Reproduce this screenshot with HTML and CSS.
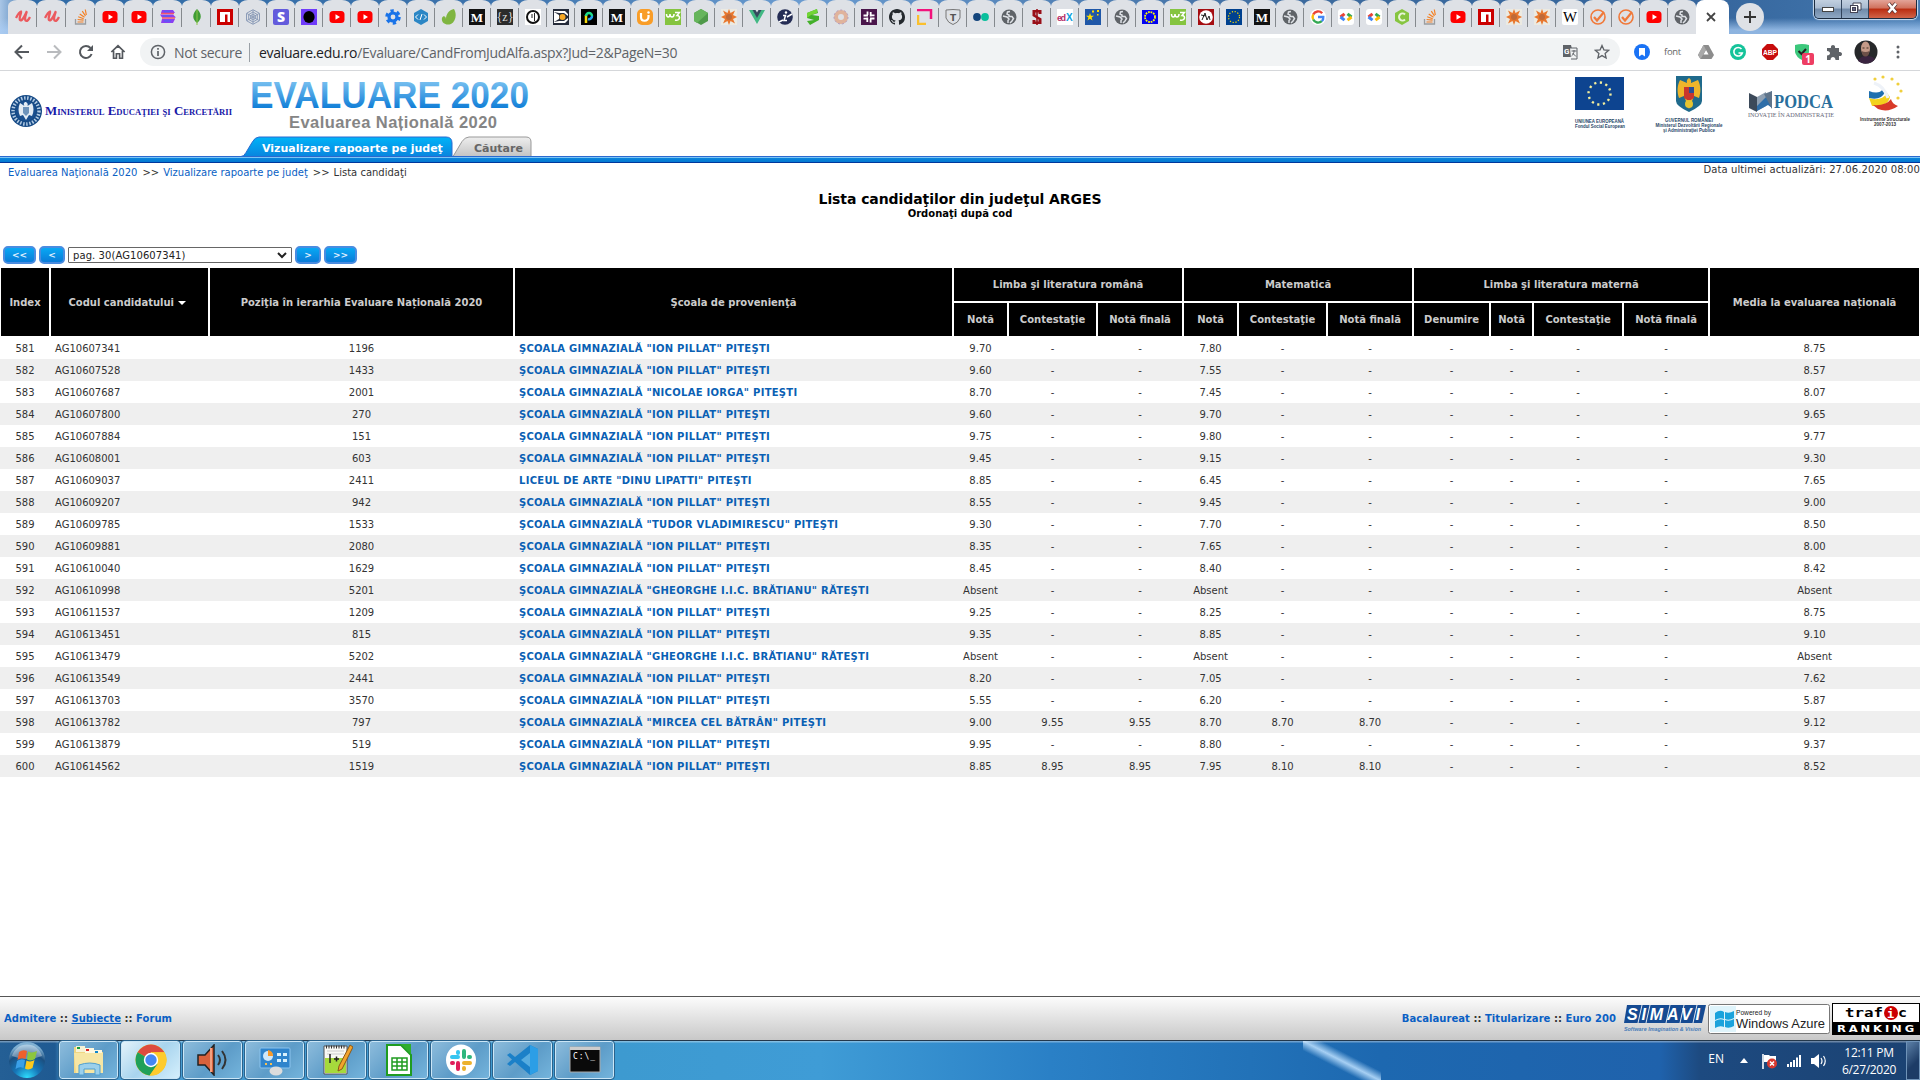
FILE: index.html
```html
<!DOCTYPE html>
<html lang="ro">
<head>
<meta charset="utf-8">
<title>Evaluare 2020</title>
<link rel="stylesheet" href="styles.css">
</head>
<body>
<svg width="0" height="0" class="defs">
  <defs>
    <linearGradient id="blueText" x1="0" y1="0" x2="0" y2="1"><stop offset=".15" stop-color="#78c0f0"/><stop offset=".85" stop-color="#0a7ad6"/></linearGradient>
    <linearGradient id="tabBlue" x1="0" y1="0" x2="0" y2="1"><stop offset="0" stop-color="#00b4f8"/><stop offset="1" stop-color="#0a80dc"/></linearGradient>
    <linearGradient id="tabGrey" x1="0" y1="0" x2="0" y2="1"><stop offset="0" stop-color="#eee"/><stop offset="1" stop-color="#c4c4c4"/></linearGradient>
    <radialGradient id="orb" cx=".5" cy="1" r=".9"><stop offset="0" stop-color="#2ee0ff"/><stop offset=".4" stop-color="#1676b8"/><stop offset=".75" stop-color="#1b4f80"/><stop offset="1" stop-color="#7fb0d2"/></radialGradient>
    <symbol id="u" viewBox="0 0 16 16"><path d="M1 9C3 5 4 3 6 2.500C7 3 3.500 9 5 11C7 13 10 6 11.500 3C12 3 9 9 10.500 11.500C12 13 14 10 15 8" fill="none" stroke="#eb5a5e" stroke-width="2.300"/></symbol>
    <symbol id="so" viewBox="0 0 16 16"><path d="M2.500 10v5h10v-5" fill="none" stroke="#9a9c9f" stroke-width="1.300"/><path d="M4.500 13h6M4.600 10.500l6 .7M5.200 7.800l5.500 1.900M6.700 5l4.800 3.300M9.300 2.200l3.200 4.800M12.300.5l1 5.500" stroke="#f48024" stroke-width="1.200"/></symbol>
    <symbol id="yt" viewBox="0 0 16 16"><rect x=".5" y="2" width="15" height="12" rx="3.500" fill="#f00"/><path d="M6.500 5.300v5.400L11 8z" fill="#fff"/></symbol>
    <symbol id="stack" viewBox="0 0 16 16"><path d="M2 1h11l2 3H1zM0 5.500h13l3 3H2zM2 10h13l-2 4H1z" fill="#8a3ff2"/><path d="M1 4.500h13M2 9h13" stroke="#f0566e" stroke-width="1.500"/><path d="M4 2.500h6M3 7h7M4 12h7" stroke="#5a5cf5" stroke-width="1.500"/></symbol>
    <symbol id="mongo" viewBox="0 0 16 16"><path d="M8 0c5 5 5 10 0 14C3 10 3 5 8 0z" fill="#3f9c35"/><path d="M8 1v15" stroke="#8bc34a"/></symbol>
    <symbol id="npm" viewBox="0 0 16 16"><path d="M0 0h16v16H0z" fill="#cb0000"/><path d="M3 3h10v10h-2.500V5.500H8V13H3z" fill="#fff"/></symbol>
    <symbol id="hex" viewBox="0 0 16 16"><g fill="none" stroke="#8c9cb8"><path d="M8 .7l6.500 3.600v7.400L8 15.300l-6.500-3.600V4.300z"/><path d="M8 3l4.300 2.500v5L8 13l-4.300-2.500v-5z"/><circle cx="8" cy="8" r="2.500"/><path d="M8 1v14M2 4.500l12 7M14 4.500l-12 7"/></g></symbol>
    <symbol id="s" viewBox="0 0 16 16"><rect width="16" height="16" rx="2" fill="#635bdc"/><text x="8" y="13" font-family="Open Sans" font-weight="800" font-size="14" text-anchor="middle" fill="#fff">S</text></symbol>
    <symbol id="oval" viewBox="0 0 16 16"><path d="M0 0h16v16H0z" fill="#6f3bfa"/><ellipse cx="8" cy="8" rx="5.600" ry="6" fill="#000"/></symbol>
    <symbol id="gear" viewBox="0 0 16 16"><circle cx="8" cy="8" r="6" fill="none" stroke="#1a73e8" stroke-width="3.500" stroke-dasharray="3.140 3.140"/><circle cx="8" cy="8" r="4" fill="none" stroke="#1a73e8" stroke-width="3.200"/></symbol>
    <symbol id="code" viewBox="0 0 16 16"><path d="M8 0l7 4v8l-7 4-7-4V4z" fill="#2b86c5"/><path d="M5 5.500L2.500 8 5 10.500M11 5.500L13.500 8 11 10.500M9 5l-2 6" fill="none" stroke="#fff"/></symbol>
    <symbol id="envato" viewBox="0 0 16 16"><path d="M13 0c3 5 2 12-3 15C4 17 0 13 1 9c1-3 4-2 4 1C5 5 8 1 13 0z" fill="#7fb541"/></symbol>
    <symbol id="m" viewBox="0 0 16 16"><path d="M0 0h16v16H0z" fill="#111"/><text x="8" y="12.500" font-family="Liberation Serif" font-weight="700" font-size="13" text-anchor="middle" fill="#fff">M</text></symbol>
    <symbol id="z" viewBox="0 0 16 16"><path d="M0 0h16v16H0z" fill="#2b2b2b"/><text x="8" y="12" font-family="Liberation Serif" font-size="12" text-anchor="middle" fill="#ddd">{z}</text></symbol>
    <symbol id="ring" viewBox="0 0 16 16"><path d="M0 0h16v16H0z" fill="#fff"/><circle cx="8" cy="8" r="6" fill="none" stroke="#111" stroke-width="2"/><path d="M7 5v4M9.500 4v8" stroke="#222"/></symbol>
    <symbol id="ball" viewBox="0 0 16 16"><path d="M0 0h16v16H0z" fill="#252b3a"/><path d="M1 2h11l3 3v2l-4-3H6L1 3zM1 14h11l3-3V9l-4 3H6l-5 1z" fill="#fff"/><path d="M1 3l5 3v4l-5 3z" fill="#fff"/><circle cx="9.500" cy="8" r="3" fill="#f8a925"/></symbol>
    <symbol id="p" viewBox="0 0 16 16"><path d="M0 0h16v16H0z"/><path d="M5 14V6" stroke="#f5d90a" stroke-width="2.500"/><path d="M5 7a3 3 0 0 1 6 0" fill="none" stroke="#1fdc8a" stroke-width="2.500"/><path d="M11 7a3 3 0 0 1-4 3" fill="none" stroke="#26a6f0" stroke-width="2.500"/></symbol>
    <symbol id="uj" viewBox="0 0 16 16"><rect width="16" height="16" rx="5" fill="#f99d28"/><path d="M4 4v4c0 5 7 5 7.500 0V6" fill="none" stroke="#fff" stroke-width="2.200"/><circle cx="11.500" cy="3.500" r="1.200" fill="#fff"/></symbol>
    <symbol id="w3" viewBox="0 0 16 16"><path d="M0 0h16v16H0z" fill="#85c440"/><path d="M1.500 5c0 4 3.500 4 3.500 0 0 4 4 4 4 0M10 3.500h4.500l-2.500 3c4 0 3 6-2 4.500" fill="none" stroke="#fff" stroke-width="1.500"/></symbol>
    <symbol id="node" viewBox="0 0 16 16"><path d="M8 0l7 4v8l-7 4-7-4V4z" fill="#4f9a4a"/><path d="M8 0l7 4-11 10-3-2V4z" fill="#66b55c"/></symbol>
    <symbol id="star" viewBox="0 0 16 16"><path d="M0 0h16v16H0z" fill="#eceae2"/><path d="M8 0l1.500 4L14 1.500 12 6l4 2-4 2 2 4.500L9.500 12 8 16l-1.500-4L2 14.500 4 10 0 8l4-2-2-4.500L6.500 4z" fill="#e8772e"/><circle cx="8" cy="8" r="3" fill="#c06a38"/></symbol>
    <symbol id="vue" viewBox="0 0 16 16"><path d="M0 1h4l4 7 4-7h4L8 15z" fill="#41b883"/><path d="M3.500 1h3L8 3.500 9.500 1h3L8 9z" fill="#35495e"/></symbol>
    <symbol id="i" viewBox="0 0 16 16"><circle cx="8" cy="8" r="7.800" fill="#252d55"/><path d="M6 6.500h2.500L7 11.500h3M2 13l4-2M10 8l5-3" stroke="#fff" stroke-width="1.500" fill="none"/><circle cx="9" cy="3.500" r="1.200" fill="#fff"/></symbol>
    <symbol id="gs" viewBox="0 0 16 16"><path d="M12 0L2 4v5l7 2-7 1 3 4 9-5V7L7 6l6-2z" fill="#43b02a"/><path d="M12 0L2 4v5l4-3 6-2z" fill="#72d535"/></symbol>
    <symbol id="pale" viewBox="0 0 16 16"><circle cx="8" cy="8" r="5" fill="none" stroke="#e0b39c" stroke-width="4"/><circle cx="8" cy="8" r="7" fill="none" stroke="#b59dbd" stroke-dasharray="2 2"/></symbol>
    <symbol id="slackp" viewBox="0 0 16 16"><path d="M0 0h16v16H0z" fill="#4a154b"/><path d="M6.500 2.500v3.500M9.700 3v4.500M2.500 6.500H7M10 6.300h3.500M6.300 8.500V13M9.600 10v3.500M2.500 9.600H6M9 9.500h4.500" stroke="#fff" stroke-width="1.800"/></symbol>
    <symbol id="gh" viewBox="0 0 16 16"><path fill="#24292e" d="M8 0C3.580 0 0 3.580 0 8c0 3.540 2.290 6.530 5.470 7.590.4.070.55-.17.55-.38v-1.490c-2.010.37-2.530-.49-2.690-.94-.09-.23-.48-.94-.82-1.130-.28-.15-.68-.52-.01-.53.630-.01 1.080.58 1.230.82.720 1.210 1.870.87 2.330.66.070-.52.280-.87.510-1.070-1.780-.2-3.640-.89-3.640-3.950 0-.87.310-1.590.820-2.150-.08-.2-.36-1.020.08-2.120 0 0 .67-.21 2.200.82A7.700 7.700 0 0 1 8 3.900c.68 0 1.360.09 2 .27 1.530-1.040 2.200-.82 2.200-.82.440 1.100.16 1.920.08 2.120.51.56.82 1.270.82 2.150 0 3.070-1.870 3.750-3.650 3.950.29.25.54.73.54 1.480v2.200c0 .21.150.46.55.38A8 8 0 0 0 16 8c0-4.420-3.580-8-8-8z"/></symbol>
    <symbol id="corner" viewBox="0 0 16 16"><path d="M0 1h14v9" fill="none" stroke="#f2137c" stroke-width="2.500"/><path d="M1 6v9h8" fill="none" stroke="#fbc02d" stroke-width="2.500"/></symbol>
    <symbol id="t" viewBox="0 0 16 16"><path d="M1 1q7-1 14 0v8q-2 5-7 6.500Q3 14 1 9z" fill="none" stroke="#777"/><text x="8" y="11.500" font-family="DejaVu Sans" font-weight="700" font-size="9" text-anchor="middle" fill="#555">T</text></symbol>
    <symbol id="dots" viewBox="0 0 16 16"><circle cx="4" cy="8" r="3.900" fill="#14457c"/><circle cx="12" cy="8" r="3.900" fill="#0abf9c"/></symbol>
    <symbol id="globe" viewBox="0 0 16 16"><circle cx="8" cy="8" r="7.500" fill="#5f6368"/><path d="M9 2.500L6.500 3 6 5l2 1v1.500H11l1.500 2L11 12l-2 2M2 7l4 1 2 2-1 1.500V14" fill="none" stroke="#dee1e6" stroke-width="1.500"/></symbol>
    <symbol id="rs" viewBox="0 0 16 16"><path d="M12.500 1v4H9.500V3.500h-3V6l6 3.500V15h-9v-4h3v1.500h3V10.500l-6-3.500V1z" fill="#990f18"/><path d="M8 0v16" stroke="#990f18" stroke-width="1.600"/></symbol>
    <symbol id="edx" viewBox="0 0 16 16"><path d="M0 0h16v16H0z" fill="#fff"/><text x="0" y="12" font-family="Liberation Sans" font-weight="700" font-size="9" textLength="9" fill="#b52a67">ed</text><text x="9" y="12" font-family="Liberation Sans" font-weight="700" font-size="10" fill="#0a9fe0">X</text></symbol>
    <symbol id="bstars" viewBox="0 0 16 16"><path d="M0 0h16v16H0z" fill="#1f57a8"/><path d="M5 4l1 2.800h3L6.600 8.500l.9 3L5 9.700l-2.500 1.800.9-3L1 6.800h3z" fill="#fd0"/><path d="M7 1.500h2v2H7zM12 1h2v2h-2zM12 5h1.500v1.500H12z" fill="#fd0"/></symbol>
    <symbol id="eub" viewBox="0 0 16 16"><path d="M0 1h16v14H0z" fill="#0404f0"/><circle cx="8" cy="8" r="5" fill="none" stroke="#ff0" stroke-width="1.800" stroke-dasharray="1.700 .92"/></symbol>
    <symbol id="eu" viewBox="0 0 16 16"><path d="M0 0h16v16H0z" fill="#00418f"/><circle cx="8" cy="8" r="5.500" fill="none" stroke="#fd0" stroke-width="1.200" stroke-dasharray="1.200 1.680"/></symbol>
    <symbol id="n" viewBox="0 0 16 16"><path d="M0 0h16v16H0z" fill="#a50d12"/><circle cx="8" cy="8" r="6.800" fill="#fff"/><path d="M4 11l3-7 2 7 2-4 1 4M3 6l5 1" fill="none" stroke="#222"/></symbol>
    <symbol id="g" viewBox="0 0 16 16"><circle cx="8" cy="8" r="8" fill="#fff"/><g fill="none" stroke-width="2.400"><path d="M12.200 4.200A5.500 5.500 0 0 0 3.200 5.500" stroke="#ea4335"/><path d="M3.200 5.500a5.500 5.500 0 0 0 0 5" stroke="#fbbc05"/><path d="M3.200 10.500a5.500 5.500 0 0 0 8.600 1.700" stroke="#34a853"/><path d="M11.800 12.200A5 5 0 0 0 13.300 8H8" stroke="#4285f4"/></g></symbol>
    <symbol id="gdev" viewBox="0 0 16 16"><rect width="16" height="16" rx="3" fill="#fff"/><g fill="none" stroke-width="3"><path d="M6.500 4.800L2.500 8" stroke="#ea4335"/><path d="M2.500 8l4 3.200" stroke="#4285f4"/><path d="M9.500 4.800l4 3.200" stroke="#34a853"/><path d="M13.500 8l-4 3.200" stroke="#fbbc05"/></g></symbol>
    <symbol id="cc" viewBox="0 0 16 16"><path d="M8 0l7 4v8l-7 4-7-4V4z" fill="#86c540"/><path d="M11 5.500a3.500 3.500 0 1 0 0 5" fill="none" stroke="#e8f5d8" stroke-width="2"/></symbol>
    <symbol id="w" viewBox="0 0 16 16"><rect width="16" height="16" rx="2" fill="#fff"/><text x="8" y="13" font-family="Liberation Serif" font-size="15" text-anchor="middle" textLength="14" lengthAdjust="spacingAndGlyphs">W</text></symbol>
    <symbol id="check" viewBox="0 0 16 16"><circle cx="8" cy="8" r="7" fill="none" stroke="#f0793a" stroke-width="1.600"/><path d="M4 8l3 3.500L14 3" fill="none" stroke="#f0793a" stroke-width="2.200"/></symbol>
  </defs>
</svg>

<div class="screen">
  <div class="tabstrip">
    <div class="tabs" id="tabs"></div>
    <div class="tab-active"><svg width="10" height="10" viewBox="0 0 10 10"><path d="M1 1l8 8M9 1L1 9" stroke="#444" stroke-width="1.800"/></svg></div>
    <div class="newtab"><svg width="12" height="12" viewBox="0 0 12 12"><path d="M6 0v12M0 6h12" stroke="#333" stroke-width="1.900"/></svg></div>
    <div class="wincontrols">
      <span class="win"><svg width="12" height="12"><rect x=".5" y="5.500" width="11" height="4" fill="#fff" stroke="#444"/></svg></span>
      <span class="win"><svg width="13" height="12"><path d="M4 1h8v7H9V4H4z" fill="#fff" stroke="#445"/><rect x="1.500" y="3.500" width="7" height="7" fill="#fff" stroke="#445"/><rect x="3.500" y="5.500" width="3" height="3" fill="#668" stroke="#445"/></svg></span>
      <span class="win close"><svg width="13" height="12"><path d="M2.500 1.500l7.500 9M10 1.500l-7.500 9" stroke="#533" stroke-width="4"/><path d="M2.500 1.500l7.500 9M10 1.500l-7.500 9" stroke="#fff" stroke-width="2.600"/></svg></span>
    </div>
  </div>

  <div class="toolbar">
    <div class="nav">
      <svg width="16" height="16" viewBox="0 0 16 16"><path d="M15 8H2M8 1.500L1.500 8 8 14.500" fill="none" stroke="#54585d" stroke-width="2"/></svg>
      <svg width="16" height="16" viewBox="0 0 16 16"><path d="M1 8h13M8 1.500L14.500 8 8 14.500" fill="none" stroke="#b9bbbe" stroke-width="2"/></svg>
      <svg width="16" height="16" viewBox="0 0 16 16"><path d="M13.600 10A6 6 0 1 1 12.500 4" fill="none" stroke="#54585d" stroke-width="2"/><path d="M15 1v6H9z" fill="#54585d"/></svg>
      <svg width="16" height="16" viewBox="0 0 18 18"><path d="M1.500 9L9 2l7.500 7M4 7.500V16h3.200v-5h3.600v5H14V7.500" fill="none" stroke="#54585d" stroke-width="1.900"/></svg>
    </div>
    <div class="omnibox">
      <svg width="16" height="16" viewBox="0 0 16 16"><circle cx="8" cy="8" r="6.600" fill="none" stroke="#5f6368" stroke-width="1.500"/><path d="M8 7v5M8 4v1.800" stroke="#5f6368" stroke-width="1.700"/></svg>
      <span class="notsecure">Not secure</span>
      <span class="url"><b>evaluare.edu.ro</b>/Evaluare/CandFromJudAlfa.aspx?Jud=2&amp;PageN=30</span>
      <svg class="translate" width="16" height="16" viewBox="0 0 16 16"><path d="M1 1h8l3 12H1z" fill="#5f6368"/><path d="M8 4h7v11H9" fill="#f1f3f4" stroke="#5f6368"/><text x="2" y="9.500" font-family="Roboto" font-weight="700" font-size="8" fill="#fff">G</text><path d="M9.500 7h5M12 6v1c0 2-1 4-2.500 5M10.500 9l3.500 3.500" stroke="#5f6368" fill="none"/></svg>
      <svg width="16" height="16" viewBox="0 0 16 16"><path d="M8 1.500l1.900 4.300 4.700.5-3.500 3.100 1 4.600L8 11.600 3.900 14l1-4.600L1.400 6.300l4.700-.5z" fill="none" stroke="#5f6368" stroke-width="1.300"/></svg>
    </div>
    <div class="ext">
      <svg viewBox="0 0 16 16"><circle cx="8" cy="8" r="8" fill="#1a73f5"/><path d="M5 4h6v8.500L8 10.500l-3 2z" fill="#fff"/></svg>
      <span class="font">font</span>
      <svg viewBox="0 0 16 16"><path d="M5.500 1h5L16 11l-2.500 4h-11L0 11z" fill="#8c8c8c"/><path d="M8 6l2.500 4.500h-5z" fill="#fff"/><path d="M5.500 1L0 11l2.500 4L8 6z" fill="#a9a9a9"/></svg>
      <svg viewBox="0 0 16 16"><circle cx="8" cy="8" r="8" fill="#15c39a"/><path d="M11.500 5a4.300 4.300 0 1 0 .8 4H8.500" fill="none" stroke="#fff" stroke-width="1.600"/></svg>
      <svg viewBox="0 0 16 16"><path d="M5 0h6l5 5v6l-5 5H5l-5-5V5z" fill="#c70d0d"/><text x="8" y="11" font-family="Liberation Sans" font-weight="700" font-size="8" textLength="14" lengthAdjust="spacingAndGlyphs" text-anchor="middle" fill="#fff">ABP</text></svg>
      <span class="badged"><svg viewBox="0 0 16 16"><path d="M1 1q7-2 14 0v7q-1 5-7 8-6-3-7-8z" fill="#3cc87c"/><path d="M4.500 7l3 3L12 5" stroke="#222" stroke-width="2" fill="none"/></svg><i>1</i></span>
      <svg viewBox="0 0 16 16"><path d="M1 4h4c-1-4 5-4 4 0h4v4c4-1 4 5 0 4v4H9.500c0-4-5-4-5 0H1v-4.500c4 0 4-4.500 0-4.500z" fill="#5f6368"/></svg>
      <span class="avatar"><svg viewBox="0 0 26 26"><circle cx="13" cy="13" r="11.500" fill="#26282a"/><path d="M5 22c2-4 5-5 9-5s6 1 8 3a12 12 0 0 1-17 2z" fill="#3a2440"/><ellipse cx="12.500" cy="9.500" rx="4.500" ry="7" fill="#c49a88"/><path d="M8.500 12q4 2 8 0l-1 4q-3 3-6 0z" fill="#6c5048"/><path d="M9.500 9h2M13.500 9h2" stroke="#432"/></svg></span>
      <svg viewBox="0 0 16 16"><g fill="#5f6368"><circle cx="8" cy="3" r="1.500"/><circle cx="8" cy="8" r="1.500"/><circle cx="8" cy="13" r="1.500"/></g></svg>
    </div>
  </div>

  <header class="site">
    <div class="ministry">
      <svg width="34" height="34" viewBox="0 0 34 34"><circle cx="17" cy="17" r="16" fill="#164a86"/><circle cx="17" cy="17" r="13" fill="none" stroke="#b4cce4" stroke-width="3.500" stroke-dasharray="1.500 1.600"/><circle cx="17" cy="17" r="10" fill="#1a4f8e"/><path d="M17 8c2 1 2 3 1.500 4L23 9c2 4 2 9 0 13l-3-1-3 5-3-5-3 1c-2-4-2-9 0-13l4.500 3C14 10 15 8 17 8z" fill="#e4ecf4"/><path d="M14 13h6v6l-3 3-3-3z" fill="#6d93bb"/></svg>
      <svg width="190" height="20"><text class="min-name" x="1" y="14" textLength="187" lengthAdjust="spacingAndGlyphs">Ministerul Educaţiei şi Cercetării</text></svg>
    </div>
    <div class="brand">
      <svg class="brand-title" width="300" height="66"><text class="big" x="7" y="37" textLength="279" lengthAdjust="spacingAndGlyphs" fill="url(#blueText)">EVALUARE 2020</text><text class="sub" x="46" y="57" textLength="208">Evaluarea Națională 2020</text></svg>
      <div class="sitetabs">
        <div class="stab on"><svg width="215" height="22"><path d="M0 20.500h1q3 0 5-4l6-10q3-5.500 7-5.500h187q6 0 6 6v13.500h3v2H0z" fill="url(#tabBlue)" stroke="#2a6ad0"/></svg><span>Vizualizare rapoarte pe judeţ</span></div>
        <div class="stab off"><svg width="82" height="22"><path d="M1 20.500l9-15q3-4.500 7-4.500h57q5 0 5 5v14.500z" fill="url(#tabGrey)" stroke="#999"/></svg><span>Căutare</span></div>
      </div>
    </div>
    <svg class="sponsors" width="360" height="84" viewBox="1560 72 360 84">
      <path d="M1575 78h49v33h-49z" fill="#0d4490"/><circle cx="1599.500" cy="94.500" r="11" fill="none" stroke="#f5ef9c" stroke-width="2.400" stroke-dasharray="2.200 3.560"/>
      <g class="tiny"><text x="1575" y="123.500" textLength="49" lengthAdjust="spacingAndGlyphs">UNIUNEA EUROPEANĂ</text><text x="1575" y="129" textLength="50" lengthAdjust="spacingAndGlyphs">Fondul Social European</text></g>
      <path d="M1676 77h26v25q0 5-13 11-13-6-13-11z" fill="#1f6a8c"/><path d="M1689 79c3 2 2 4 2 5l7-3c3 6 3 12 1 18l-5-2-5 13-5-13-5 2c-2-6-2-12 1-18l7 3c0-1-1-3 2-5z" fill="#efb52b"/><path d="M1684 88h10v11l-5 3-5-3z" fill="#c8362e"/><path d="M1689 88h5v6h-5z" fill="#2b4f96"/><circle cx="1689" cy="105" r="4" fill="#e6c430"/>
      <g class="tiny mid"><text x="1689" y="123" textLength="48" lengthAdjust="spacingAndGlyphs">GUVERNUL ROMÂNIEI</text><text x="1689" y="128" textLength="67" lengthAdjust="spacingAndGlyphs">Ministerul Dezvoltării Regionale</text><text x="1689" y="133" textLength="52" lengthAdjust="spacingAndGlyphs">şi Administraţiei Publice</text></g>
      <path d="M1749 94l8 4v15l-8-4z" fill="#3c4a5a"/><path d="M1757 98l9-5v14l-9 5z" fill="#8fa0b2"/><path d="M1757 107l15-15v17l-4-3-11 6z" fill="#2f6ea8"/><path d="M1764 95l8-3v18z" fill="#5f748a"/>
      <text class="podca" x="1774" y="109" textLength="59" lengthAdjust="spacingAndGlyphs">PODCA</text><text class="inov" x="1748" y="117.500" textLength="86" lengthAdjust="spacingAndGlyphs">INOVAŢIE ÎN ADMINISTRAŢIE</text>
      <path d="M1869 92q10 4 14-2l2 3q-4 9-16 6z" fill="#1f6fae"/><path d="M1869 99q12 4 18-5l3 4q-2 10-18 9z" fill="#f3d21c"/><path d="M1873 106q13 1 18-6 1 5 7 7-10 7-20 3z" fill="#d83a28"/><path d="M1874 84q10 3 14 15" fill="none" stroke="#eef2f8" stroke-width="3"/>
      <g fill="#f0cf3c"><circle cx="1875" cy="80" r="1.600"/><circle cx="1883" cy="78" r="1.600"/><circle cx="1892" cy="80" r="1.600"/><circle cx="1898" cy="85" r="1.600"/><circle cx="1901" cy="92" r="1.600"/><circle cx="1898" cy="99" r="1.600"/></g>
      <g class="tiny mid dark"><text x="1885" y="122" textLength="50" lengthAdjust="spacingAndGlyphs">Instrumente Structurale</text><text x="1885" y="127" textLength="22" lengthAdjust="spacingAndGlyphs">2007-2013</text></g>
    </svg>
  </header>
  <div class="bluebar"></div>

  <main>
    <div class="crumbs">
      <div class="trail"><a>Evaluarea Naţională 2020</a><span>&gt;&gt;</span><a>Vizualizare rapoarte pe judeţ</a><span>&gt;&gt;</span>Lista candidaţi</div>
      <div class="updated">Data ultimei actualizări: 27.06.2020 08:00</div>
    </div>
    <h1>Lista candidaţilor din judeţul ARGES</h1>
    <h2>Ordonaţi după cod</h2>
    <div class="pager">
      <span class="pbtn wide">&lt;&lt;</span><span class="pbtn">&lt;</span>
      <span class="select">pag. 30(AG10607341)<svg width="10" height="7" viewBox="0 0 10 7"><path d="M1 1l4 4 4-4" fill="none" stroke="#222" stroke-width="2"/></svg></span>
      <span class="pbtn">&gt;</span><span class="pbtn wide">&gt;&gt;</span>
    </div>
    <table>
      <colgroup><col class="c50"><col class="c159"><col class="c305"><col class="c439"><col class="c55"><col class="c89"><col class="c86"><col class="c55"><col class="c89"><col class="c86"><col class="c77"><col class="c43"><col class="c90"><col class="c86"><col class="c211"></colgroup>
      <thead>
        <tr><th rowspan="2">Index</th><th rowspan="2" class="sorted">Codul candidatului <i class="sort"></i></th><th rowspan="2">Poziţia în ierarhia Evaluare Națională 2020</th><th rowspan="2">Şcoala de provenienţă</th><th colspan="3">Limba şi literatura română</th><th colspan="3">Matematică</th><th colspan="4">Limba şi literatura maternă</th><th rowspan="2">Media la evaluarea națională</th></tr>
        <tr><th>Notă</th><th>Contestaţie</th><th>Notă finală</th><th>Notă</th><th>Contestaţie</th><th>Notă finală</th><th>Denumire</th><th>Notă</th><th>Contestaţie</th><th>Notă finală</th></tr>
      </thead>
      <tbody id="rows"></tbody>
    </table>
  </main>

  <footer>
    <div class="flinks"><a>Admitere</a> :: <a class="ul">Subiecte</a> :: <a>Forum</a></div>
    <div class="fright">
      <div class="flinks"><a>Bacalaureat</a> :: <a>Titularizare</a> :: <a>Euro 200</a></div>
      <svg class="simavi" width="82" height="30"><path d="M3 1h79l-4 18H0z" fill="#154a92"/><path d="M18 1l-4 18M26 1l-4 18M46 1l-4 18M60 1l-4 18M73 1l-4 18" stroke="#dfe6ef"/><text x="3" y="16" textLength="73" font-family="Liberation Sans" font-weight="700" font-style="italic" font-size="16" fill="#fff">SIMAVI</text><text x="0" y="27" textLength="77" lengthAdjust="spacingAndGlyphs" font-family="Liberation Sans" font-style="italic" font-weight="700" font-size="6" fill="#4a7cb8">Software Imagination &amp; Vision</text></svg>
      <svg class="azure" width="122" height="30"><rect x=".5" y=".5" width="121" height="29" rx="2" fill="#fff" stroke="#777"/><path d="M2 2h26v26H2z" fill="#dff4fb"/><path d="M7 9q5-4 9-1v7q-4-2-9 1zM17 8q4 2 9-1v7q-5 3-9 1zM7 17q5-3 9-1v7q-4-2-9 1zM17 16q4 2 9-1v7q-5 3-9 1z" fill="#1aa3dc"/><text x="28" y="11" font-family="Liberation Sans" font-size="7" textLength="35" lengthAdjust="spacingAndGlyphs" fill="#222">Powered by</text><text x="28" y="24" font-family="Liberation Sans" font-size="13" textLength="89" lengthAdjust="spacingAndGlyphs" fill="#222">Windows Azure</text></svg>
      <svg class="trafic" width="88" height="32"><path d="M0 0h88v32H0z"/><path d="M1 1h86v18H1z" fill="#fff"/><circle cx="59" cy="10" r="7" fill="#c00"/><g font-family="DejaVu Sans Mono" font-weight="700" font-size="12"><text x="13" y="14" textLength="38" lengthAdjust="spacingAndGlyphs">traf</text><text x="55" y="15" fill="#fff">i</text><text x="66" y="14" textLength="9" lengthAdjust="spacingAndGlyphs">c</text></g><text x="5" y="29" font-family="DejaVu Sans" font-weight="700" font-size="8" textLength="80" lengthAdjust="spacingAndGlyphs" letter-spacing="2" fill="#fff">RANKING</text></svg>
    </div>
  </footer>

  <div class="taskbar">
    <div class="start"><svg width="38" height="38" viewBox="0 0 38 38"><circle cx="19" cy="19" r="18" fill="url(#orb)"/><path d="M4 15a15.500 15.500 0 0 1 30 0q-15 6-30 0z" fill="#fff" opacity=".35"/><path d="M11 11q4-3 8-1l-1.500 8q-4-2-8 1z" fill="#f0602c"/><path d="M20 10.500q4 2 9-.5l-2 8q-4 2.500-8 .5z" fill="#8cc63e"/><path d="M9 20q4-3 8-1l-1.500 8q-4-2-8 1z" fill="#3aa0e8"/><path d="M18.500 19.500q4 2 8-.5l-2 8q-4 2.500-7.500.5z" fill="#fcc91c"/></svg></div>
    <div class="apps">
      <div class="app"><svg viewBox="0 0 32 32"><path d="M1 3h9l1 3h9l1 2h9v21H1z" fill="#efd684"/><path d="M3 2h9v6H3z" fill="#f7f3d6"/><path d="M12 4h9v5h-9zM20 6h9v5h-9z" fill="#fdf8df"/><path d="M4 3h3v2H4z" fill="#1a9c3a"/><path d="M13 5h3v2h-3z" fill="#d22"/><path d="M22 7h3v2h-3z" fill="#18c"/><path d="M1 9h29v20H3z" fill="#f6e6a4"/><path d="M6 31V21q11-4 21 0v10h-5v-6H11v6z" fill="#9bd0ec" stroke="#4f9fd0"/></svg></div>
      <div class="app active"><svg viewBox="0 0 32 32"><circle cx="16" cy="16" r="15.500" fill="#fbc116"/><path d="M16 16L2.600 8.300A15.500 15.500 0 0 1 29.400 8.300H16z" fill="#dd4b3e"/><path d="M16 16L2.600 8.300A15.500 15.500 0 0 0 14.500 31.400L22.700 20z" fill="#1fa05a"/><path d="M29.400 8.300H16v8l6.700 3.700-8 11.400A15.500 15.500 0 0 0 29.400 8.300z" fill="#fdcb2e"/><circle cx="16" cy="16" r="7.200" fill="#fff"/><circle cx="16" cy="16" r="5.700" fill="#4587f4"/></svg></div>
      <div class="app"><svg viewBox="0 0 32 32"><path d="M1 11h7l9-10v30L8 21H1z" fill="#d9623c" stroke="#222" stroke-width="1.500"/><path d="M14 4v24" stroke="#f2a080" stroke-width="2"/><path d="M21 11q4 5 0 10M25 7q7 9 0 18" fill="none" stroke="#333" stroke-width="2"/></svg></div>
      <div class="app"><svg viewBox="0 0 32 32"><rect x="1" y="4" width="30" height="20" rx="1" fill="#2f84cc" stroke="#8cc4ee"/><circle cx="9" cy="12" r="5" fill="#cfe8fa"/><path d="M9 12V6a6 6 0 0 1 5 6z" fill="#f79a2a"/><path d="M18 9h4v3h-4zM24 9h4v3h-4zM18 15h4v3h-4zM24 15h4v3h-4z" fill="#d8f0fc"/><path d="M6 19h2v2H6zM11 19h2v2h-2z" fill="#f8c050"/><ellipse cx="17" cy="27" rx="6.500" ry="4.500" fill="#dcdcdc"/></svg></div>
      <div class="app"><svg viewBox="0 0 32 32"><path d="M3 2h23v28H3z" fill="#f8f8f4" stroke="#555"/><path d="M4 14h21v15H4z" fill="#a6d93c"/><path d="M5 3h20" stroke="#333" stroke-width="3" stroke-dasharray="1 1.500"/><path d="M6 7h17M6 10h17" stroke="#ccc"/><path d="M29 1l3 2-11 22-4 2 1-5z" fill="#f3a32c" stroke="#8a5818"/><path d="M9 10v9M13 15h5M15.500 12.500v5" stroke="#222" stroke-width="1.500"/></svg></div>
      <div class="app"><svg viewBox="0 0 32 32"><path d="M4 1h14l10 10v20H4z" fill="#fff" stroke="#1f9c20" stroke-width="2"/><path d="M18 0h10v10z" fill="#2fae2c"/><path d="M9 14h15v12H9zM9 18h15M9 22h15M14 14v12M19 14v12" fill="none" stroke="#1f9c20" stroke-width="1.500"/></svg></div>
      <div class="app"><svg viewBox="0 0 32 32"><ellipse cx="16" cy="16" rx="15" ry="15.500" fill="#fff"/><g stroke-width="4" stroke-linecap="round"><path d="M13 8v1M13 13H7" stroke="#36c5f0"/><path d="M19 7v6M24 13h1" stroke="#2eb67d"/><path d="M19 19h6M19 24v1" stroke="#ecb22e"/><path d="M13 19v6M7 19h1" stroke="#e01e5a"/></g></svg></div>
      <div class="app"><svg viewBox="0 0 32 32"><path d="M23 1l8 4v22l-8 4L8 18l-5 4-3-2 5-4.500L0 11l3-2 5 4z" fill="#1b80c8"/><path d="M23 9v14l-9-7z" fill="#57ace0"/><path d="M23 1l8 4v22l-8 4z" fill="#2c9ee6"/></svg></div>
      <div class="app"><svg viewBox="0 0 32 32"><path d="M1 3h30v25H1z" fill="#0a0a0a" stroke="#aaa"/><path d="M1 3h30v3H1z" fill="#ccc"/><text x="4" y="15" font-family="DejaVu Sans Mono" font-size="8" textLength="22" fill="#fff">C:\_</text></svg></div>
    </div>
    <div class="tray">
      <span class="lang">EN</span>
      <svg width="8" height="5"><path d="M4 0l4 5H0z" fill="#fff"/></svg>
      <svg width="17" height="16"><path d="M2 1v15" stroke="#fff" stroke-width="1.600"/><path d="M3 2h5l1 1h6v7H8L7 9H3z" fill="#fff"/><circle cx="11" cy="10.500" r="5" fill="#d8382e"/><path d="M9 8.500l4 4M13 8.500l-4 4" stroke="#fff" stroke-width="1.500"/></svg>
      <svg width="16" height="12"><path d="M1 9h2v3H1zM4 7h2v5H4zM7 5h2v7H7zM10 2.500h2V12h-2zM13 0h2v12h-2z" fill="#fff"/></svg>
      <svg width="17" height="16"><path d="M1 5h3l5-4v14l-5-4H1z" fill="#fff"/><path d="M11 5q2 3 0 6M13.500 3q3.500 5 0 10" fill="none" stroke="#fff" stroke-width="1.200"/></svg>
      <div class="clock">12:11 PM<br>6/27/2020</div>
      <div class="peek"></div>
    </div>
  </div>
</div>
<script src="script.js"></script>
</body>
</html>
```
FILE: styles.css
```css
* { box-sizing: border-box; }
body { margin: 0; background: #fff; overflow: hidden; }
.defs { position: absolute; }
.screen { width: 1920px; height: 1080px; display: flex; flex-direction: column; font-family: "DejaVu Sans", sans-serif; font-size: 10px; color: #333; }
svg { display: block; flex: none; }

/* browser tabs */
.tabstrip { height: 34px; flex: none; display: flex; padding-left: 8px; background: linear-gradient(transparent 18px, rgba(170,205,245,.75) 30px), linear-gradient(90deg, #a9c6e6 0, #2f6aa6 30px, #3d73ac 500px, #6a9bd0 800px, #3c6a9e 1300px, #35659c 1700px, #4479b0 1920px); }
.tabs { display: flex; background: linear-gradient(transparent 6px, #dee1e6 6px); }
.tab { width: 28.020px; height: 34px; background: #dee1e6; border-radius: 9px 9px 0 0 / 6px 6px 0 0; display: flex; align-items: center; justify-content: center; position: relative; }
.tab:nth-child(-n+7) { width: 29px; }
.tab svg { width: 16px; height: 16px; }
.tab::after { content: ""; position: absolute; right: 0; top: 8px; width: 1px; height: 19px; background: #85898e; }
.tab:last-child::after { display: none; }
.tab-active { width: 33px; background: #fff; border-radius: 8px 8px 0 0; display: flex; align-items: center; justify-content: center; padding-right: 3px; }
.newtab { width: 28px; height: 28px; border-radius: 50%; background: #dee1e6; margin: 3px 0 0 7px; display: flex; align-items: center; justify-content: center; }
.wincontrols { margin-left: auto; margin-right: 3px; height: 19px; display: flex; border: 1px solid #1c2c40; border-top: 0; border-radius: 0 0 5px 5px; overflow: hidden; box-shadow: 0 0 1px 1px #cfe0f2; }
.win { width: 27px; display: flex; align-items: center; justify-content: center; background: linear-gradient(#c2d0e0 0, #a8bad0 45%, #6f89a8 50%, #90a9c4); border-right: 1px solid #31445c; padding-bottom: 2px; }
.win.close { width: 47px; border: 0; background: linear-gradient(#e3a498 0, #d0705c 45%, #ba2c10 50%, #d06448); }

/* address bar */
.toolbar { height: 37px; flex: none; display: flex; align-items: center; border-bottom: 1px solid #d5d7da; padding-left: 14px; }
.nav { display: flex; gap: 16px; align-items: center; width: 126px; }
.omnibox { width: 1480px; height: 28px; border-radius: 14px; background: #f1f3f4; display: flex; align-items: center; padding: 0 10px; font: 14px "Open Sans", sans-serif; color: #5f6368; }
.notsecure { margin-left: 8px; width: 76px; border-right: 1px solid #9aa0a6; line-height: 19px; letter-spacing: -.3px; white-space: nowrap; }
.url { margin-left: 9px; letter-spacing: -.3px; }
.url b { font-weight: 400; color: #202124; }
.translate { margin-left: auto; margin-right: 16px; }
.ext { display: flex; align-items: center; margin-left: 6px; }
.ext > * { width: 16px; height: 16px; margin: 0 8px; }
.ext > .font { font: 9.500px/15px "Open Sans", sans-serif; margin: 0 6px; width: 20px; color: #666; letter-spacing: -.3px; }
.badged { position: relative; }
.badged i { position: absolute; left: 8px; top: 9px; width: 12px; height: 12px; border-radius: 2px; background: #ee3e63; color: #fff; font: 700 10px/12px "Open Sans", sans-serif; text-align: center; }
.ext > .avatar { width: 26px; height: 26px; margin: 0 3px; }

/* site header */
.site { height: 85px; flex: none; display: flex; align-items: flex-start; padding-left: 9px; }
.ministry { display: flex; align-items: center; padding-top: 23px; width: 234px; gap: 1px; }
.min-name { font: 700 12px "Liberation Serif", serif; font-variant: small-caps; fill: #1818a8; }
.brand { width: 320px; }
.brand-title { height: 65px; overflow: visible; }
.big { font: 700 37px "Liberation Sans", sans-serif; }
.sub { font: 700 16.500px "Liberation Sans", sans-serif; fill: #858585; }
.sitetabs { display: flex; }
.stab { position: relative; height: 22px; }
.stab svg { margin-left: -3px; }
.stab span { position: absolute; top: 6px; font-weight: 700; font-size: 11px; line-height: 14px; white-space: nowrap; }
.on span { left: 19px; color: #fff; }
.off span { left: 19px; color: #666; }
.sponsors { margin-left: auto; }
.tiny { font: 700 5.500px "Liberation Sans", sans-serif; fill: #1f4668; }
.mid { text-anchor: middle; }
.dark { fill: #333; }
.podca { font: 700 19px "Liberation Serif", serif; fill: #2a6f9c; }
.inov { font: 6px "Liberation Serif", serif; fill: #667; }
.bluebar { height: 7px; flex: none; position: relative; background: linear-gradient(#2a6ad0 1px, #9cd4fa 1px, #5cb4f0 2px, #0a86dc 2px, #0478d0 6px, #00369c 6px); }

/* page */
main { flex: 1; display: flex; flex-direction: column; }
a { color: #0a5fc4; }
.crumbs { display: flex; justify-content: space-between; height: 28px; padding: 4px 0 0 8px; line-height: 12px; }
.trail span { margin: 0 4px 0 5px; }
.updated { margin-top: -3px; letter-spacing: .1px; }
h1 { font-size: 14px; line-height: 16px; margin: 0; text-align: center; color: #000; letter-spacing: -.08px; }
h2 { font-size: 10px; line-height: 13px; margin: 0; text-align: center; color: #000; }
.pager { display: flex; align-items: center; gap: 3px; margin: 26px 0 3px 3px; height: 18px; }
.pbtn { width: 26px; height: 18px; border: 2px solid #4a8ce0; border-radius: 5px; background: linear-gradient(#08a8f4, #0a7cd8); color: #e0f0ff; font-size: 9px; font-weight: 700; line-height: 14px; text-align: center; }
.wide { width: 33px; }
.select { width: 224px; height: 16px; border: 1px solid #666; padding: 0 4px; display: flex; align-items: center; justify-content: space-between; color: #222; border-radius: 1px; letter-spacing: .08px; }
table { width: 1920px; table-layout: fixed; border-collapse: separate; border-spacing: 0; }
.c50 { width: 50px; } .c159 { width: 159px; } .c305 { width: 305px; } .c439 { width: 439px; } .c55 { width: 55px; }
.c89 { width: 89px; } .c86 { width: 86px; } .c77 { width: 77px; } .c43 { width: 43px; } .c90 { width: 90px; } .c211 { width: 211px; }
th { height: 35px; background: #000; color: #ccc; border: 1px solid #fff; padding: 0; font-size: 10px; white-space: nowrap; }
th.sorted { padding-right: 5px; }
.sort { display: inline-block; border: 4px solid transparent; border-top: 4px solid #fff; border-bottom: 0; margin-bottom: 1px; }
td { height: 22px; padding: 1px 0 0; text-align: center; white-space: nowrap; }
tbody tr:nth-child(even) { background: #efefef; }
td:nth-child(2), td:nth-child(4) { text-align: left; padding-left: 5px; }
td:nth-child(4) { font-weight: 700; color: #0a5fb4; letter-spacing: .28px; }

/* footer */
footer { height: 44px; flex: none; border-top: 1px solid #555; background: linear-gradient(#fcfcfc, #c8c8c8); display: flex; justify-content: space-between; padding-left: 4px; align-items: center; }
.flinks { font-weight: 700; line-height: 14px; letter-spacing: .04px; }
.ul { text-decoration: underline; }
.fright { display: flex; align-items: center; }
.simavi { margin-left: 8px; }
.azure { margin-left: 2px; }
.trafic { margin-left: 2px; }

/* taskbar */
.taskbar { height: 40px; flex: none; display: flex; border-top: 1px solid #23384c; background: linear-gradient(rgba(255,255,255,.35) 1px, transparent 2px), linear-gradient(to top right, transparent 38%, rgba(190,225,255,.85) 50%, transparent 62%) 1303px 0 / 78px 40px no-repeat, linear-gradient(90deg, #245f95 0, #1f5a92 55px, #4a9ed4 65px, #3d9ad0 620px, #3f9cd6 820px, #2a80c6 1050px, #2272b8 1250px, #1d68b0 1380px, #1f62ac 1660px, #1d4a80 1700px, #1b4272 1920px); }
.start { width: 59px; padding: 0 8px; }
.apps { display: flex; gap: 3px; }
.app { width: 59px; height: 38px; border: 1px solid #cbe6f6; border-radius: 3px; outline: 1px solid #2a628c; outline-offset: 0; background: linear-gradient(135deg, #8dbcdc, #5d9cc8 55%, #74b4dc); display: flex; align-items: center; justify-content: center; }
.app svg { width: 32px; height: 32px; }
.app.active { background: linear-gradient(135deg, #e4f2fa, #a8d4ee 50%, #d4effc); }
.tray { margin-left: auto; display: flex; align-items: center; color: #fff; font: 12px "Open Sans", sans-serif; }
.lang { margin-right: 16px; margin-top: -5px; }
.tray svg + svg { margin-left: 13px; }
.tray svg:nth-of-type(4), .tray svg:nth-of-type(3) { margin-left: 8px; }
.clock { width: 60px; margin: 0 7px 0 12px; text-align: center; line-height: 17px; letter-spacing: -.3px; white-space: nowrap; }
.peek { width: 14px; height: 39px; border: 1px solid #6f93b8; background: linear-gradient(135deg, #5d81a8, #1d3c66 60%); }
```
FILE: script.js
```js
const icons = 'u u so yt yt stack mongo npm hex s oval yt yt gear code envato m z ring ball p m uj w3 node star vue i gs pale slackp gh corner t dots globe rs edx bstars globe eub w3 n eu m globe g gdev gdev cc so yt npm star star w check check yt globe'.split(' ');
document.getElementById('tabs').innerHTML = icons
  .map(id => `<div class="tab"><svg viewBox="0 0 16 16"><use href="#${id}"/></svg></div>`).join('');

const ION = 'ŞCOALA GIMNAZIALĂ "ION PILLAT" PITEŞTI';
const GHE = 'ŞCOALA GIMNAZIALĂ "GHEORGHE I.I.C. BRĂTIANU" RĂTEŞTI';
// code, position, school, Romanian mark, maths mark, average, [Romanian appeal, maths appeal]
const rows = [
  ['AG10607341', 1196, ION, '9.70', '7.80', '8.75'],
  ['AG10607528', 1433, ION, '9.60', '7.55', '8.57'],
  ['AG10607687', 2001, 'ŞCOALA GIMNAZIALĂ "NICOLAE IORGA" PITEŞTI', '8.70', '7.45', '8.07'],
  ['AG10607800', 270, ION, '9.60', '9.70', '9.65'],
  ['AG10607884', 151, ION, '9.75', '9.80', '9.77'],
  ['AG10608001', 603, ION, '9.45', '9.15', '9.30'],
  ['AG10609037', 2411, 'LICEUL DE ARTE "DINU LIPATTI" PITEŞTI', '8.85', '6.45', '7.65'],
  ['AG10609207', 942, ION, '8.55', '9.45', '9.00'],
  ['AG10609785', 1533, 'ŞCOALA GIMNAZIALĂ "TUDOR VLADIMIRESCU" PITEŞTI', '9.30', '7.70', '8.50'],
  ['AG10609881', 2080, ION, '8.35', '7.65', '8.00'],
  ['AG10610040', 1629, ION, '8.45', '8.40', '8.42'],
  ['AG10610998', 5201, GHE, 'Absent', 'Absent', 'Absent'],
  ['AG10611537', 1209, ION, '9.25', '8.25', '8.75'],
  ['AG10613451', 815, ION, '9.35', '8.85', '9.10'],
  ['AG10613479', 5202, GHE, 'Absent', 'Absent', 'Absent'],
  ['AG10613549', 2441, ION, '8.20', '7.05', '7.62'],
  ['AG10613703', 3570, ION, '5.55', '6.20', '5.87'],
  ['AG10613782', 797, 'ŞCOALA GIMNAZIALĂ "MIRCEA CEL BĂTRÂN" PITEŞTI', '9.00', '8.70', '9.12', '9.55', '8.70'],
  ['AG10613879', 519, ION, '9.95', '8.80', '9.37'],
  ['AG10614562', 1519, ION, '8.85', '7.95', '8.52', '8.95', '8.10'],
];
document.getElementById('rows').innerHTML = rows.map(([code, pos, school, ro, ma, avg, roA = '-', maA = '-'], i) =>
  '<tr>' + [581 + i, code, pos, school, ro, roA, roA, ma, maA, maA, '-', '-', '-', '-', avg]
    .map(v => `<td>${v}</td>`).join('') + '</tr>').join('');
```
